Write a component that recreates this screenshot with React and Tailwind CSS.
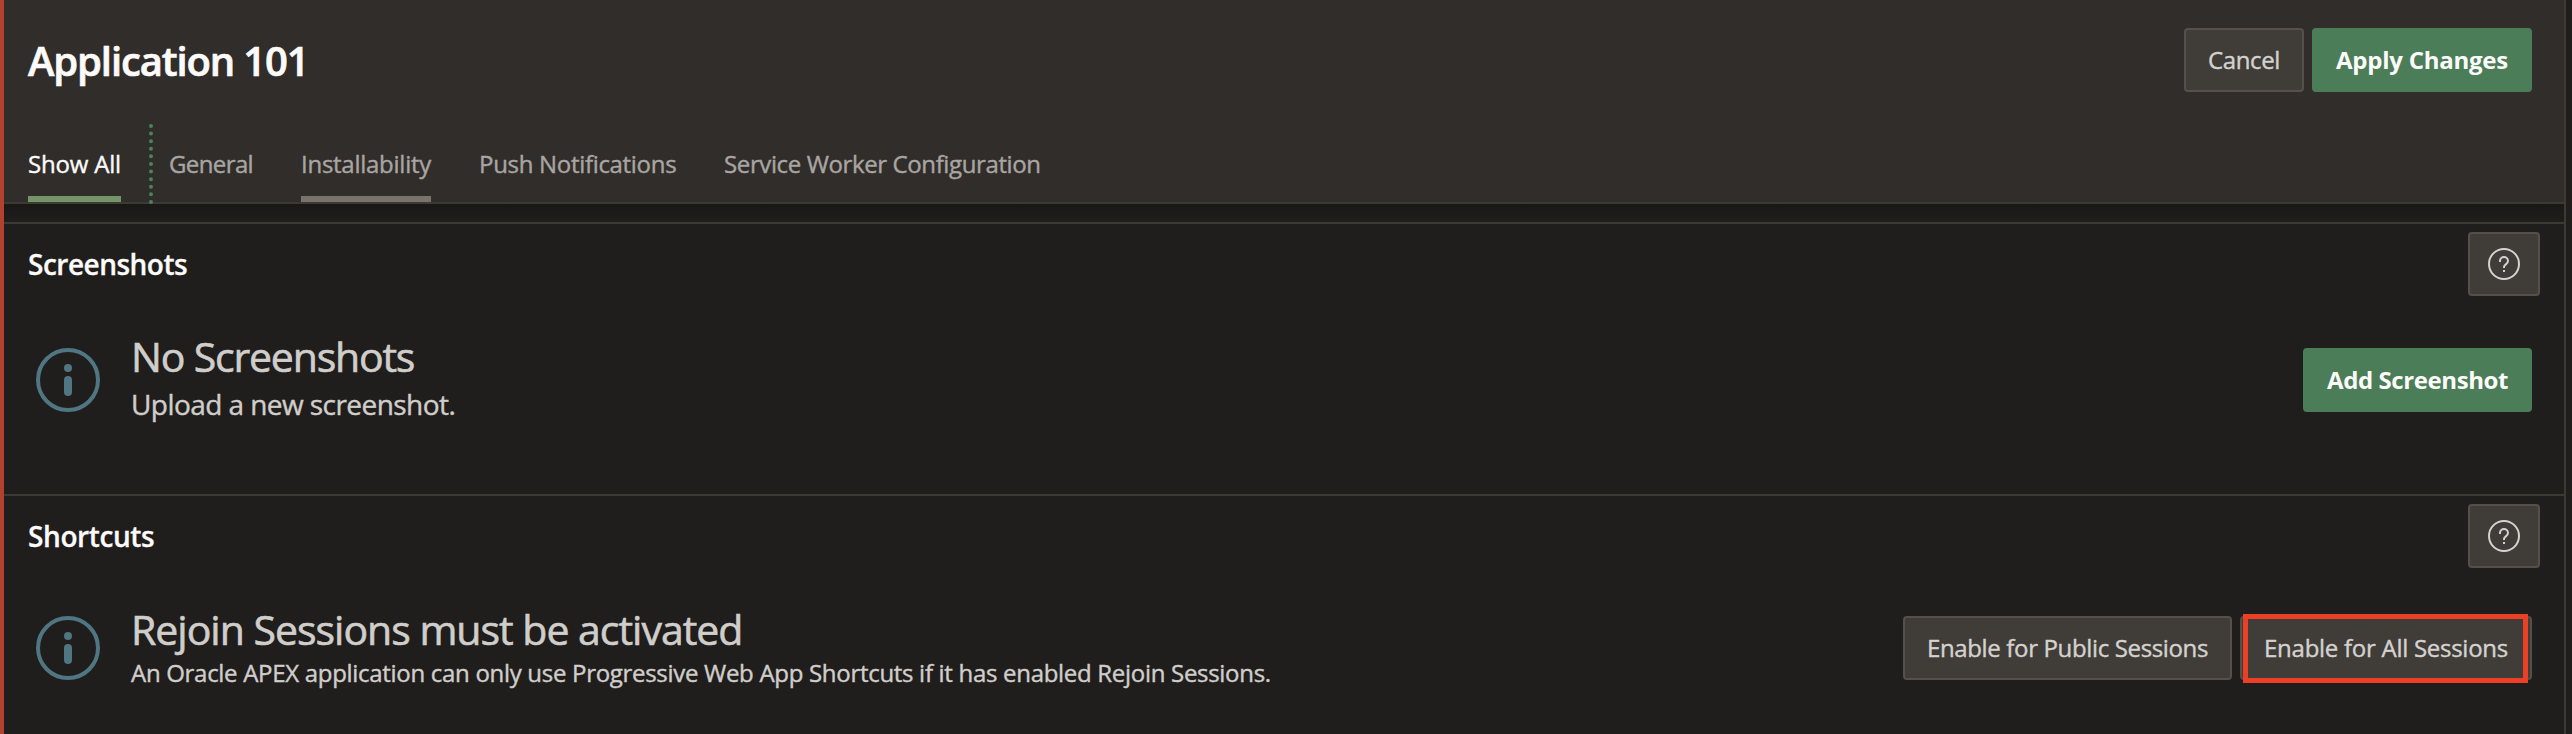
const TABS = [
  { label: "General", className: "w-[84px] tracking-[-0.61px]" },
  { label: "Installability", className: "w-[130px] tracking-[-0.26px]", hovered: true },
  { label: "Push Notifications", className: "w-[197px] tracking-[-0.31px]" },
  { label: "Service Worker Configuration", className: "w-[317px] tracking-[-0.38px]" },
];

function Button({ children, hot = false, className = "" }) {
  const look = hot
    ? "bg-[#4b7d58] border-[#4b7d58] text-[#fcfbfa] font-bold"
    : "bg-[#403c37] border-[#56504b] text-[#d4d2cf] [-webkit-text-stroke:0.4px]";
  return (
    <button className={`flex h-16 items-center justify-center whitespace-nowrap rounded-[4px] border-2 text-[24px] ${look} ${className}`}>
      {children}
    </button>
  );
}

function HelpButton() {
  return (
    <Button className="w-[72px]">
      <svg width="32" height="32" viewBox="0 0 32 32" fill="none" stroke="#d4d2cf" strokeWidth="2">
        <circle cx="16" cy="16" r="15" />
        <path d="M12 14v-1a4 4 0 0 1 8 0c0 3.2-4 3.4-4 6v1" />
        <path d="M15 22h2v2h-2z" fill="#d4d2cf" stroke="none" />
      </svg>
    </Button>
  );
}

function InfoIcon() {
  return (
    <svg className="shrink-0" width="64" height="64" viewBox="0 0 64 64" fill="none">
      <circle cx="32" cy="32" r="30" stroke="#4f7682" strokeWidth="4" />
      <circle cx="32" cy="20" r="4" fill="#4f7682" />
      <rect x="28" y="28" width="8" height="20" rx="4" fill="#4f7682" />
    </svg>
  );
}

function Section({ title, titleClass, children, className = "" }) {
  return (
    <section className={`flex flex-col border-t-2 border-[#3d3a34] pt-2 ${className}`}>
      <div className="flex h-16 items-center justify-between px-6">
        <h2 className={`text-[28px] font-semibold text-[#fcfbfa] [-webkit-text-stroke:0.3px] ${titleClass}`}>{title}</h2>
        <HelpButton />
      </div>
      {children}
    </section>
  );
}

function Message({ heading, headingClass, text, textClass, children, className = "" }) {
  return (
    <div className={`flex h-[104px] items-center px-8 ${className}`}>
      <InfoIcon />
      <div className="ml-[31px] flex-1 whitespace-nowrap pb-1 text-[#d0cecb]">
        <h3 className={`text-[41px] leading-[52px] [-webkit-text-stroke:0.6px] ${headingClass}`}>{heading}</h3>
        <p className={`[-webkit-text-stroke:0.4px] ${textClass}`}>{text}</p>
      </div>
      <div className="flex gap-2">{children}</div>
    </div>
  );
}

export default function App() {
  return (
    <div className="flex h-[734px] w-[2572px] overflow-hidden border-l-4 border-[#b3412f] bg-[#201e1c] font-['Open_Sans','Noto_Sans',sans-serif]">
      <main className="flex w-[2562px] flex-col border-r-2 border-[#3d3a34]">
        <header className="flex h-[204px] flex-col border-b-2 border-[#3d3a34] bg-[#312d2a]">
          <div className="mt-7 flex h-16 items-center justify-between pl-6 pr-8">
            <h1 className="pt-px text-[40px] font-semibold tracking-[-1.13px] text-[#fcfbfa] [-webkit-text-stroke:0.7px]">Application 101</h1>
            <div className="flex gap-2">
              <Button className="w-[120px] tracking-[-0.37px]">Cancel</Button>
              <Button hot className="w-[220px] tracking-[-0.25px]">Apply Changes</Button>
            </div>
          </div>
          <nav className="mt-8 flex h-20 whitespace-nowrap pl-6 text-[24px] leading-[80px] text-[#a8a5a2] [-webkit-text-stroke:0.4px]">
            <div className="relative w-[93px] tracking-[-0.19px] text-[#fcfbfa]">
              Show All
              <span className="absolute bottom-[2px] left-0 h-[6px] w-full bg-[#759469]" />
            </div>
            <div className="ml-7 mr-4 h-20 border-l-4 border-dotted border-[#4c825c]" />
            <div className="flex gap-12">
              {TABS.map((tab) => (
                <div key={tab.label} className={`relative ${tab.className}`}>
                  {tab.label}
                  {tab.hovered && <span className="absolute bottom-[2px] left-0 h-[6px] w-full bg-[#79736e]" />}
                </div>
              ))}
            </div>
          </nav>
        </header>
        <div className="h-[18px] bg-linear-to-b from-[#1a1817] to-[#201e1c]" />
        <Section title="Screenshots" titleClass="tracking-[-0.5px]" className="h-[272px]">
          <Message
            className="mt-8"
            heading="No Screenshots"
            headingClass="tracking-[-1.18px]"
            text="Upload a new screenshot."
            textClass="text-[28px] leading-[44px] tracking-[-0.56px]"
          >
            <Button hot className="w-[229px] tracking-[-0.41px]">Add Screenshot</Button>
          </Message>
        </Section>
        <Section title="Shortcuts" titleClass="tracking-[-0.4px]" className="h-[240px]">
          <Message
            className="mt-7"
            heading="Rejoin Sessions must be activated"
            headingClass="tracking-[-1px]"
            text="An Oracle APEX application can only use Progressive Web App Shortcuts if it has enabled Rejoin Sessions."
            textClass="text-[24px] leading-[35px] tracking-[-0.3px]"
          >
            <Button className="w-[329px] tracking-[-0.35px]">Enable for Public Sessions</Button>
            <div className="relative">
              <Button className="w-[292px] tracking-[-0.27px]">Enable for All Sessions</Button>
              <span className="absolute -top-[2px] left-[3px] h-[69px] w-[285px] border-[5px] border-[#eb4025]" />
            </div>
          </Message>
        </Section>
      </main>
    </div>
  );
}
